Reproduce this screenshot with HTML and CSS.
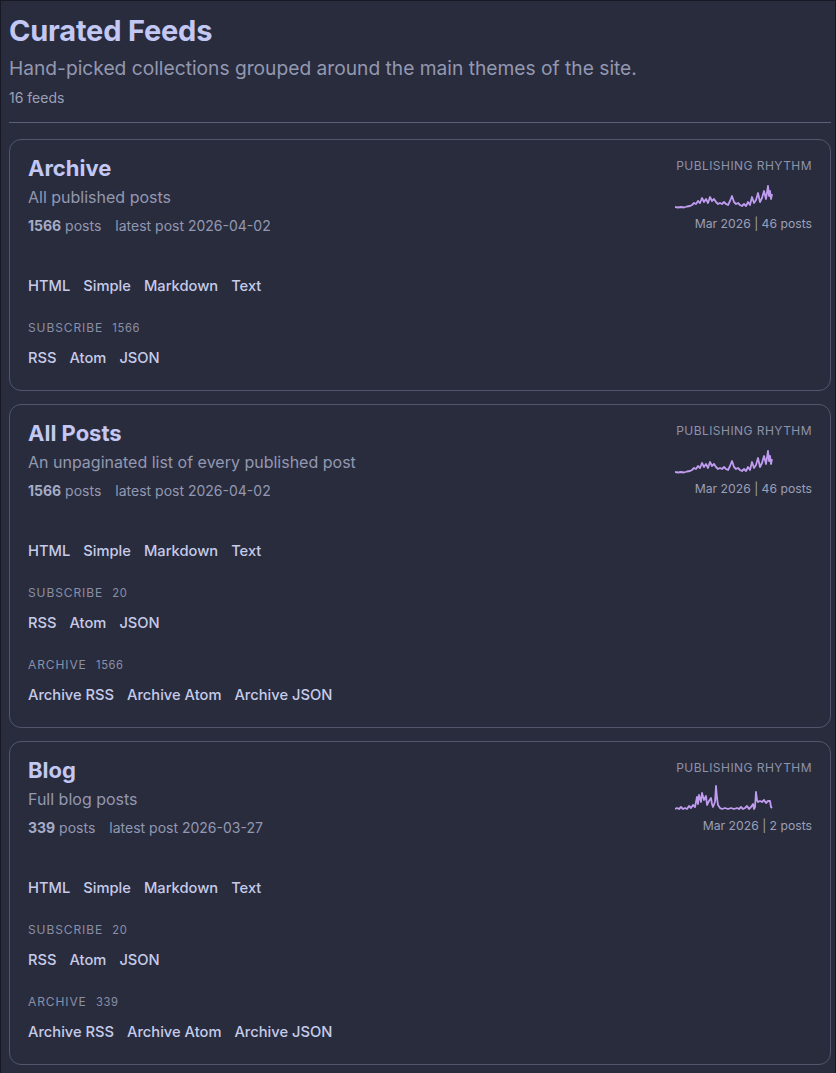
FILE: index.html
```html
<!DOCTYPE html>
<html lang="en">
<head>
<meta charset="utf-8">
<title>Curated Feeds</title>
<link rel="stylesheet" href="styles.css">
</head>
<body>
<div class="page">
  <header class="head">
    <h1 class="title">Curated Feeds</h1>
    <p class="lede">Hand-picked collections grouped around the main themes of the site.</p>
    <p class="count">16 feeds</p>
  </header>
  <hr class="rule">

  <section class="card">
    <div class="top">
      <div class="info">
        <h2 class="name">Archive</h2>
        <p class="desc">All published posts</p>
        <p class="meta"><span><b>1566</b> posts</span><span>latest post 2026-04-02</span></p>
      </div>
      <div class="rhythm">
        <div class="rlabel">Publishing rhythm</div>
        <svg class="spark" width="137" height="28" viewBox="0 0 137 28"><polyline points="0,25 3,25.5 6,25 9,25.5 12,24.5 15,24 17,23 19,21 21,22 23,19 25,21 27,16 29,20 31,17 33,21 35,15 37,19 39,17 41,20 43,22 45,21 47,22 49,20 51,22 53,23 55,19 57,14 59,20 61,22 63,21 65,23 67,24 69,22 71,24 73,20 75,23 77,15 79,21 81,18 83,11 85,20 87,16 89,9 91,17 93,4 94,14 95,9 96,17 97,12" /></svg>
        <div class="rcap">Mar 2026 | 46 posts</div>
      </div>
    </div>
    <nav class="links first"><a>HTML</a><a>Simple</a><a>Markdown</a><a>Text</a></nav>
    <div class="group">
      <div class="glabel">Subscribe <span class="gnum">1566</span></div>
      <nav class="links"><a>RSS</a><a>Atom</a><a>JSON</a></nav>
    </div>
  </section>

  <section class="card">
    <div class="top">
      <div class="info">
        <h2 class="name">All Posts</h2>
        <p class="desc">An unpaginated list of every published post</p>
        <p class="meta"><span><b>1566</b> posts</span><span>latest post 2026-04-02</span></p>
      </div>
      <div class="rhythm">
        <div class="rlabel">Publishing rhythm</div>
        <svg class="spark" width="137" height="28" viewBox="0 0 137 28"><polyline points="0,25 3,25.5 6,25 9,25.5 12,24.5 15,24 17,23 19,21 21,22 23,19 25,21 27,16 29,20 31,17 33,21 35,15 37,19 39,17 41,20 43,22 45,21 47,22 49,20 51,22 53,23 55,19 57,14 59,20 61,22 63,21 65,23 67,24 69,22 71,24 73,20 75,23 77,15 79,21 81,18 83,11 85,20 87,16 89,9 91,17 93,4 94,14 95,9 96,17 97,12" /></svg>
        <div class="rcap">Mar 2026 | 46 posts</div>
      </div>
    </div>
    <nav class="links first"><a>HTML</a><a>Simple</a><a>Markdown</a><a>Text</a></nav>
    <div class="group">
      <div class="glabel">Subscribe <span class="gnum">20</span></div>
      <nav class="links"><a>RSS</a><a>Atom</a><a>JSON</a></nav>
    </div>
    <div class="group">
      <div class="glabel">Archive <span class="gnum">1566</span></div>
      <nav class="links"><a>Archive RSS</a><a>Archive Atom</a><a>Archive JSON</a></nav>
    </div>
  </section>

  <section class="card">
    <div class="top">
      <div class="info">
        <h2 class="name">Blog</h2>
        <p class="desc">Full blog posts</p>
        <p class="meta"><span><b>339</b> posts</span><span>latest post 2026-03-27</span></p>
      </div>
      <div class="rhythm">
        <div class="rlabel">Publishing rhythm</div>
        <svg class="spark" width="137" height="28" viewBox="0 0 137 28"><polyline points="0,25 2,24 4,25 6,23 8,25 10,24 12,25 14,22 16,24 18,21 20,23 22,13 23,20 24,11 26,18 27,9 29,16 31,12 32,21 34,17 36,14 37,20 38,23 40,18 41,2 42,14 43,21 45,24 47,25 50,24 53,25 56,24 59,25 62,24 64,25 66,23 68,25 70,24 72,22 74,25 76,23 78,20 79,25 80,23 81,8 82,16 83,18 85,17 87,18 89,16 91,19 93,17 95,17 96,23 97,24" /></svg>
        <div class="rcap">Mar 2026 | 2 posts</div>
      </div>
    </div>
    <nav class="links first"><a>HTML</a><a>Simple</a><a>Markdown</a><a>Text</a></nav>
    <div class="group">
      <div class="glabel">Subscribe <span class="gnum">20</span></div>
      <nav class="links"><a>RSS</a><a>Atom</a><a>JSON</a></nav>
    </div>
    <div class="group">
      <div class="glabel">Archive <span class="gnum">339</span></div>
      <nav class="links"><a>Archive RSS</a><a>Archive Atom</a><a>Archive JSON</a></nav>
    </div>
  </section>
</div>
</body>
</html>
```

FILE: styles.css
```css
html, body {
  margin: 0;
  padding: 0;
  background: #292c3d;
}
body {
  font-family: Inter, "Noto Sans", sans-serif;
  color: #c6cbe9;
}
.page {
  min-height: 100vh;
  box-sizing: border-box;
  border: 1px solid #181925;
  padding: 13px 4px 20px 8px;
}
.head { margin: 0; }
.title {
  margin: 0;
  font-size: 29px;
  line-height: 34px;
  font-weight: 700;
  color: #c3c7f4;
  letter-spacing: -0.2px;
}
.lede {
  margin: 7px 0 0;
  font-size: 19.2px;
  line-height: 26px;
  color: #9398b1;
}
.count {
  margin: 7px 0 0;
  font-size: 14px;
  line-height: 20px;
  color: #9ba0b8;
}
.rule {
  margin: 14px 0 16px;
  border: 0;
  border-top: 1px solid #5b6078;
  height: 0;
}
.card {
  border: 1px solid #51566d;
  border-radius: 12px;
  padding: 14px 18px 20px;
  margin-bottom: 13px;
}
.top {
  display: flex;
  justify-content: space-between;
  align-items: flex-start;
}
.name {
  margin: 0;
  font-size: 22px;
  line-height: 28px;
  font-weight: 700;
  color: #c3c7f4;
}
.desc {
  margin: 0;
  font-size: 16px;
  line-height: 30px;
  color: #9398b1;
}
.meta {
  margin: 0;
  font-size: 14px;
  line-height: 28px;
  color: #9398b1;
  display: flex;
  gap: 14px;
}
.meta b {
  font-weight: 700;
  color: #a6abc6;
}
.rhythm {
  width: 137px;
  display: flex;
  flex-direction: column;
  align-items: flex-end;
  padding-top: 1px;
}
.rlabel {
  font-size: 12px;
  line-height: 22px;
  letter-spacing: 0.45px;
  text-transform: uppercase;
  color: #8e93ab;
  white-space: nowrap;
}
.spark {
  display: block;
  margin-top: 5px;
}
.spark polyline {
  fill: none;
  stroke: #c09cf0;
  stroke-width: 1.8;
  stroke-linejoin: round;
}
.rcap {
  margin-top: 5px;
  font-size: 12.2px;
  line-height: 18px;
  color: #9ba0b8;
  white-space: nowrap;
}
.links {
  display: flex;
  gap: 13px;
  font-size: 14.7px;
  line-height: 24px;
  font-weight: 500;
}
.links a { color: #c6cbe9; }
.links.first { margin-top: 34px; }
.group { margin-top: 22px; }
.glabel {
  font-size: 12px;
  line-height: 16px;
  letter-spacing: 0.9px;
  text-transform: uppercase;
  color: #8a8fa7;
  margin-bottom: 10px;
}
.gnum {
  margin-left: 5px;
  font-size: 11.2px;
  letter-spacing: 0.6px;
}
```
